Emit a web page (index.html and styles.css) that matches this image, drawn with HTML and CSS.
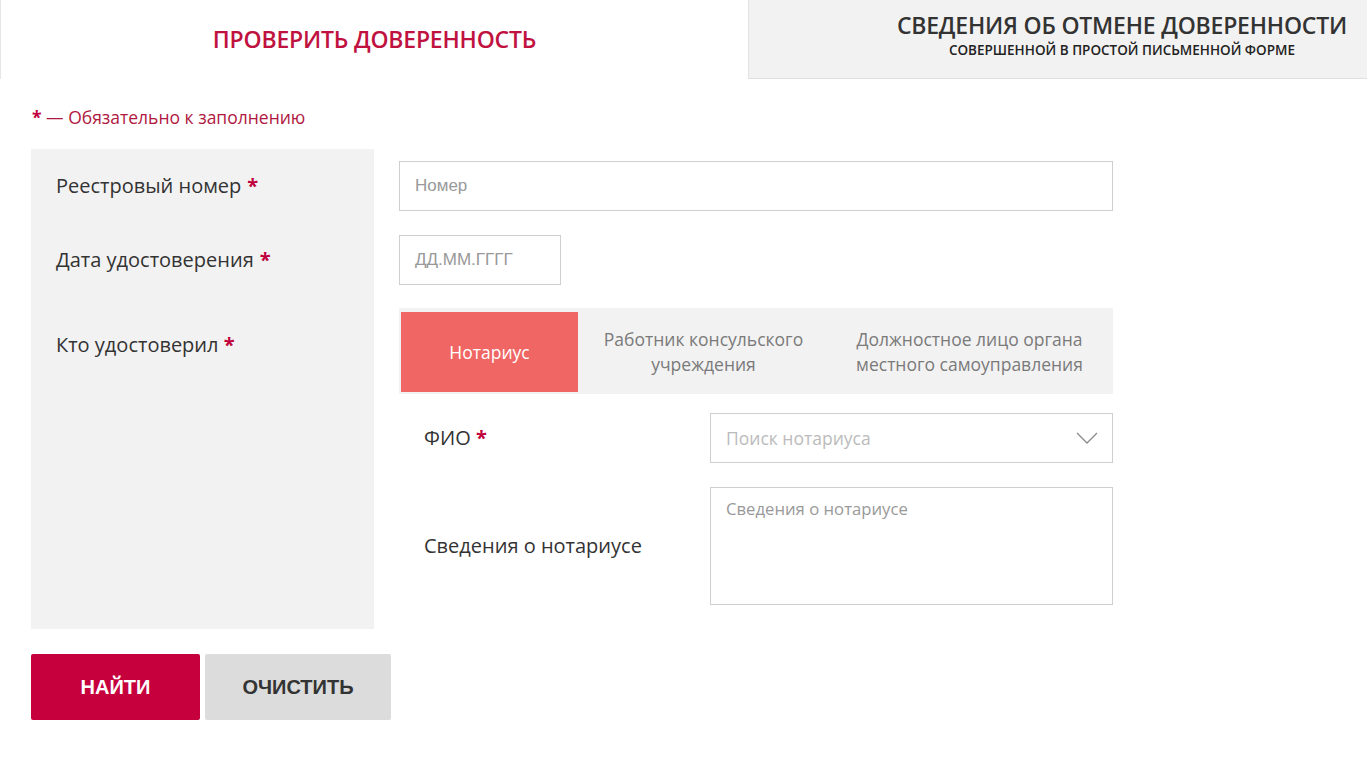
FILE: index.html
```html
<!DOCTYPE html>
<html lang="ru">
<head>
<meta charset="utf-8">
<title>Проверить доверенность</title>
<link rel="stylesheet" href="styles.css">
</head>
<body>
<div class="tabs">
  <div class="tab tab-active">ПРОВЕРИТЬ ДОВЕРЕННОСТЬ</div>
  <div class="tab tab-other">
    <div class="tab-other-inner">
      <div class="tab-title">СВЕДЕНИЯ ОБ ОТМЕНЕ ДОВЕРЕННОСТИ</div>
      <div class="tab-sub">СОВЕРШЕННОЙ В ПРОСТОЙ ПИСЬМЕННОЙ ФОРМЕ</div>
    </div>
  </div>
</div>

<div class="content">
  <div class="req-note"><span class="star">*</span> — Обязательно к заполнению</div>

  <div class="form">
    <div class="lbl lbl-center">Реестровый номер <span class="star">*</span></div>
    <div class="fld fld-row1"><div class="input input-arial input-wide">Номер</div></div>

    <div class="lbl lbl-center">Дата удостоверения <span class="star">*</span></div>
    <div class="fld fld-row2"><div class="input input-arial input-date">ДД.ММ.ГГГГ</div></div>

    <div class="lbl lbl-top">Кто удостоверил <span class="star">*</span></div>
    <div class="fld fld-row3">
      <div class="seg">
        <div class="seg-item seg-active seg-1">Нотариус</div>
        <div class="seg-item seg-2">Работник консульского<br>учреждения</div>
        <div class="seg-item seg-3">Должностное лицо органа<br>местного самоуправления</div>
      </div>
      <div class="sub">
        <div class="sub-lbl">ФИО <span class="star">*</span></div>
        <div class="input select">
          <span>Поиск нотариуса</span>
          <svg class="chev" width="22" height="12" viewBox="0 0 22 12"><path d="M1 1 L11 11 L21 1" fill="none" stroke="#8a8a8a" stroke-width="1.3"/></svg>
        </div>
        <div class="sub-lbl">Сведения о нотариусе</div>
        <div class="input textarea">Сведения о нотариусе</div>
      </div>
    </div>
  </div>

  <div class="buttons">
    <div class="btn btn-find">НАЙТИ</div>
    <div class="btn btn-clear">ОЧИСТИТЬ</div>
  </div>
</div>
</body>
</html>
```

FILE: styles.css
```css
* { box-sizing: border-box; }
html, body { margin: 0; padding: 0; background: #fff; }
body {
  font-family: "Open Sans", "Liberation Sans", sans-serif;
  color: #333;
  width: 1367px;
}

.tabs {
  display: flex;
  height: 79px;
}
.tab { height: 79px; }
.tab-active {
  width: 749px;
  border-left: 1px solid #e6e6e6;
  border-right: 1px solid #e2e2e2;
  display: flex;
  align-items: center;
  justify-content: center;
  color: #c0123f;
  font-size: 23px;
  font-weight: 600;
  letter-spacing: -0.2px;
  padding-bottom: 2px;
}
.tab-other {
  flex: 1;
  background: #f2f2f2;
  border-bottom: 1px solid #e0e0e0;
  display: flex;
  justify-content: flex-end;
  padding-right: 20px;
  padding-top: 9px;
}
.tab-other-inner { text-align: center; }
.tab-title {
  font-size: 23px;
  font-weight: 600;
  color: #333;
  letter-spacing: -0.2px;
  line-height: 32px;
}
.tab-sub {
  font-size: 13.5px;
  font-weight: 600;
  color: #222;
  line-height: 19px;
}

.content { padding: 25px 0 0 31px; }

.req-note {
  font-size: 17.5px;
  color: #b0183f;
  line-height: 26px;
  padding-left: 1px;
}
.star { color: #c0003c; font-weight: 700; }

.form {
  display: grid;
  grid-template-columns: 343px 714px;
  column-gap: 25px;
  margin-top: 19px;
}
.lbl {
  background: #f2f2f2;
  font-size: 20px;
  line-height: 28px;
  padding-left: 25px;
  color: #333;
}
.lbl-center { display: flex; align-items: center; gap: 6px; }
.lbl-top { padding-top: 34px; }

.fld-row1, .fld-row2 { padding: 12px 0; }

.input {
  height: 50px;
  border: 1px solid #cfcfcf;
  background: #fff;
  font-size: 17.5px;
  color: #aaa;
  display: flex;
  align-items: center;
  padding-left: 15px;
}
.input-arial {
  font-family: "Liberation Sans", Arial, sans-serif;
  font-size: 17px;
  color: #999;
}
.input-wide { width: 714px; }
.input-date { width: 162px; }

.fld-row3 { padding: 11px 0 24px; }
.seg {
  background: #f2f2f2;
  display: flex;
  height: 86px;
  padding: 4px 3px 2px 2px;
}
.seg-item {
  display: flex;
  align-items: center;
  justify-content: center;
  text-align: center;
  font-size: 17.5px;
  line-height: 25px;
  color: #7a7a7a;
}
.seg-active { background: #f06664; color: #fff; }
.seg-1 { width: 177px; }
.seg-2 { width: 251px; }
.seg-3 { flex: 1; }

.sub {
  margin-top: 19px;
  display: grid;
  grid-template-columns: 311px 403px;
  row-gap: 24px;
  align-items: center;
}
.sub-lbl {
  font-size: 20px;
  line-height: 28px;
  padding-left: 25px;
  color: #333;
}
.select {
  justify-content: space-between;
  padding-right: 14px;
  color: #bbb;
}
.chev { display: block; }
.textarea {
  height: 118px;
  align-items: flex-start;
  padding-top: 9px;
  font-size: 16.7px;
  color: #999;
}

.buttons {
  display: flex;
  gap: 5px;
  margin-top: 25px;
}
.btn {
  height: 66px;
  display: flex;
  align-items: center;
  justify-content: center;
  font-family: "Liberation Sans", Arial, sans-serif;
  font-weight: 700;
  font-size: 20px;
  border-radius: 2px;
}
.btn-find { width: 169px; background: #c6003d; color: #fff; }
.btn-clear { width: 186px; background: #dcdcdc; color: #333; }
```
